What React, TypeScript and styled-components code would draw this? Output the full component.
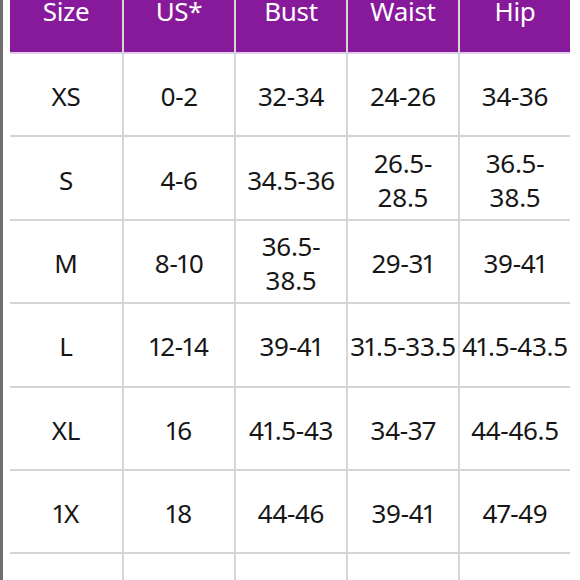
import React from "react";
import styled, { createGlobalStyle } from "styled-components";

const Global = createGlobalStyle`
  html, body { margin: 0; padding: 0; background: #ffffff; }
  body { width: 580px; height: 580px; overflow: hidden; }
`;

const Page = styled.div`
  display: flex;
  width: 580px;
  height: 580px;
  overflow: hidden;
  background: #ffffff;
  font-family: "Noto Sans", "Open Sans", sans-serif;
`;

const Edge = styled.div`
  width: 3px;
  flex: none;
  background: #6e6e6e;
`;

const TableWrap = styled.div`
  flex: 1;
  padding: 0 10px 0 7px;
  display: flex;
  flex-direction: column;
`;

const Row = styled.div<{ $head?: boolean; $h: number }>`
  display: grid;
  grid-template-columns: repeat(5, 1fr);
  height: ${(p) => p.$h}px;
  flex: none;
  background: ${(p) => (p.$head ? "#87199b" : "#ffffff")};
  border-bottom: ${(p) => (p.$head ? "2px solid #e3cde8" : "2px solid #d4d4d4")};
`;

const Cell = styled.div<{ $head?: boolean }>`
  display: flex;
  flex-direction: column;
  align-items: center;
  justify-content: ${(p) => (p.$head ? "flex-start" : "center")};
  padding-top: ${(p) => (p.$head ? "0" : "3px")};
  font-size: 26px;
  line-height: ${(p) => (p.$head ? "22px" : "34px")};
  color: ${(p) => (p.$head ? "#ffffff" : "#161616")};
  font-variant-numeric: proportional-nums;
  white-space: nowrap;
  letter-spacing: -0.3px;
  & + & {
    border-left: ${(p) => (p.$head ? "2px solid #e6d6ea" : "2.5px solid #d6d6d6")};
  }
`;

const Line = styled.span`
  display: block;
`;

const header = ["Size", "US*", "Bust", "Waist", "Hip"];

const rows: (string | string[])[][] = [
  ["XS", "0-2", "32-34", "24-26", "34-36"],
  ["S", "4-6", "34.5-36", ["26.5-", "28.5"], ["36.5-", "38.5"]],
  ["M", "8-10", ["36.5-", "38.5"], "29-31", "39-41"],
  ["L", "12-14", "39-41", "31.5-33.5", "41.5-43.5"],
  ["XL", "16", "41.5-43", "34-37", "44-46.5"],
  ["1X", "18", "44-46", "39-41", "47-49"],
  ["", "", "", "", ""],
];

export default function App() {
  return (
    <>
      <Global />
      <Page>
        <Edge />
        <TableWrap>
          <Row $head $h={52}>
            {header.map((h) => (
              <Cell $head key={h}>
                {h}
              </Cell>
            ))}
          </Row>
          {rows.map((r, i) => (
            <Row $h={81.4} key={i}>
              {r.map((v, j) => (
                <Cell key={j}>
                  {Array.isArray(v) ? v.map((l) => <Line key={l}>{l}</Line>) : v}
                </Cell>
              ))}
            </Row>
          ))}
        </TableWrap>
      </Page>
    </>
  );
}
